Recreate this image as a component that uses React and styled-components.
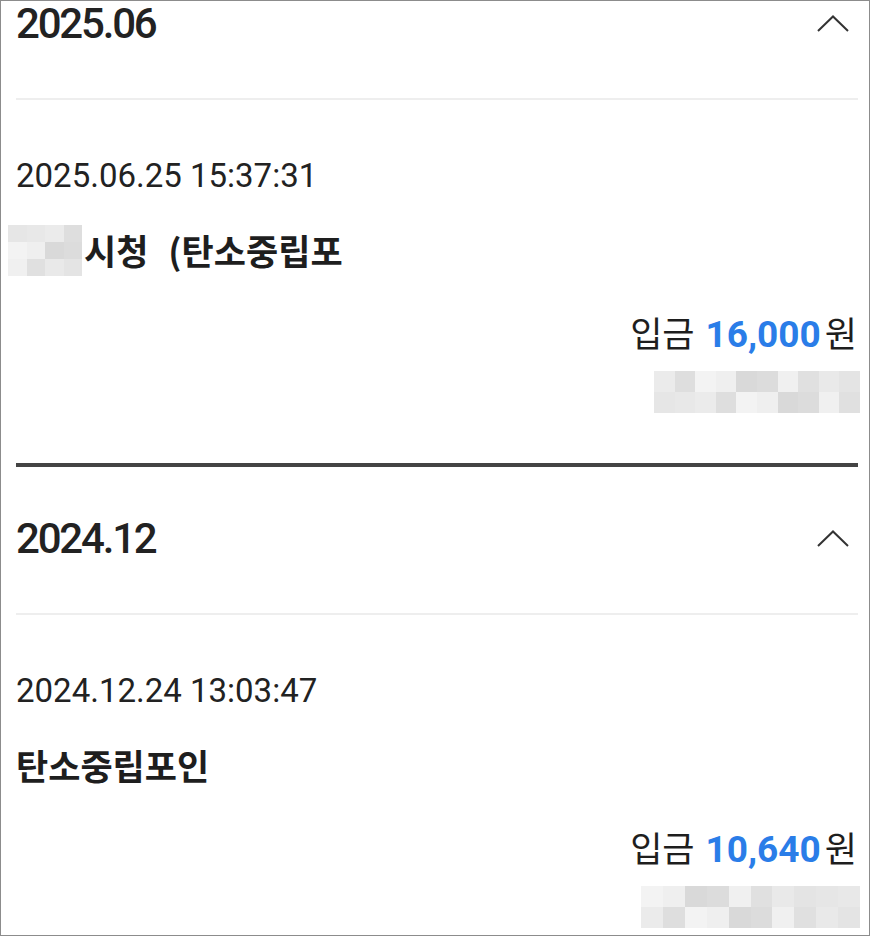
import React from "react";
import styled, { createGlobalStyle } from "styled-components";

const GlobalStyle = createGlobalStyle`
  html, body {
    margin: 0;
    padding: 0;
    background: #ffffff;
  }
  body {
    font-family: Roboto, "Noto Sans CJK KR", sans-serif;
    color: #222222;
  }
`;

const Frame = styled.div`
  width: 870px;
  height: 936px;
  box-sizing: border-box;
  border: 1px solid #8c8c8c;
  overflow: hidden;
  background: #ffffff;
`;

const List = styled.div`
  margin-top: -49px;
  padding: 0 11px 0 15px;
`;

const Section = styled.section`
  border-top: ${(p) => (p.first ? "none" : "4px solid #444444")};
`;

const MonthRow = styled.div`
  height: 146px;
  display: flex;
  align-items: center;
  justify-content: space-between;
  border-bottom: 2px solid #eeeeee;
`;

const Month = styled.h2`
  margin: -3px 0 0;
  font-family: Roboto, sans-serif;
  font-size: 42px;
  line-height: 48px;
  font-weight: 500;
  color: #222222;
  letter-spacing: -2.2px;
`;

const Chevron = styled.svg`
  width: 32px;
  height: 17px;
  margin-right: 9px;
  margin-top: -4px;
`;

const Item = styled.div`
  padding: 56px 0 50px;
  display: flex;
  flex-direction: column;
`;

const DateText = styled.div`
  font-family: Roboto, sans-serif;
  font-size: 33px;
  line-height: 40px;
  color: #222222;
`;

const Title = styled.div`
  margin-top: 34px;
  height: 40px;
  display: flex;
  align-items: center;
  font-family: "Noto Sans CJK KR", sans-serif;
  font-size: 35px;
  font-weight: 700;
  line-height: 40px;
  color: #1e1e1e;
  word-spacing: 12px;
  white-space: pre;
`;

const Amount = styled.div`
  margin-top: 42px;
  align-self: flex-end;
  display: flex;
  align-items: baseline;
  gap: 4px;
  font-family: "Noto Sans CJK KR", sans-serif;
  font-size: 35px;
  line-height: 40px;
  color: #1e1e1e;
  margin-right: 1px;
`;

const Money = styled.span`
  margin-left: 7px;
  font-family: Roboto, sans-serif;
  font-size: 37px;
  font-weight: 700;
  color: #2a7de8;
`;

const Mosaic = styled.div`
  display: grid;
  flex-shrink: 0;
  grid-template-columns: repeat(${(p) => p.cols}, ${(p) => p.cell}px);
  grid-auto-rows: ${(p) => p.rowH}px;
  align-self: ${(p) => (p.right ? "flex-end" : "auto")};
  margin: ${(p) => p.margin || "0"};
`;

const Tile = styled.div`
  background: ${(p) => p.shade};
`;

const ChevronUp = () => (
  <Chevron viewBox="0 0 32 17">
    <polyline
      points="1,16 16,1.5 31,16"
      fill="none"
      stroke="#333333"
      strokeWidth="2"
    />
  </Chevron>
);

const shades = [
  "#efefef", "#e6e6e6", "#dcdcdc", "#ebebeb", "#e0e0e0",
  "#f3f3f3", "#e4e4e4", "#d9d9d9", "#e8e8e8", "#f0f0f0",
  "#dedede", "#e9e9e9",
];

const MosaicBlock = ({ cols, rows, cell, rowH, seed, right, margin }) => {
  const tiles = [];
  for (let i = 0; i < cols * rows; i++) {
    tiles.push(<Tile key={i} shade={shades[(i * 7 + seed) % shades.length]} />);
  }
  return (
    <Mosaic cols={cols} cell={cell} rowH={rowH} right={right} margin={margin}>
      {tiles}
    </Mosaic>
  );
};

const records = [
  {
    month: "2025.06",
    date: "2025.06.25 15:37:31",
    title: "시청 (탄소중립포",
    masked: true,
    amount: "16,000",
    maskCols: 10,
    maskCell: 20.6,
    maskSeed: 3,
  },
  {
    month: "2024.12",
    date: "2024.12.24 13:03:47",
    title: "탄소중립포인",
    masked: false,
    amount: "10,640",
    maskCols: 10,
    maskCell: 21.9,
    maskSeed: 5,
  },
];

export default function App() {
  return (
    <Frame>
      <GlobalStyle />
      <List>
        {records.map((r, i) => (
          <Section key={r.month} first={i === 0}>
            <MonthRow>
              <Month>{r.month}</Month>
              <ChevronUp />
            </MonthRow>
            <Item>
              <DateText>{r.date}</DateText>
              <Title>
                {r.masked && (
                  <MosaicBlock
                    cols={4}
                    rows={3}
                    cell={18.5}
                    rowH={17}
                    seed={1}
                    margin="0 2px 0 -8px"
                  />
                )}
                {r.title}
              </Title>
              <Amount>
                <span>입금</span>
                <Money>{r.amount}</Money>
                <span>원</span>
              </Amount>
              <MosaicBlock
                cols={r.maskCols}
                rows={2}
                cell={r.maskCell}
                rowH={21}
                seed={r.maskSeed}
                right
                margin="16px -2px 0 0"
              />
            </Item>
          </Section>
        ))}
      </List>
    </Frame>
  );
}
